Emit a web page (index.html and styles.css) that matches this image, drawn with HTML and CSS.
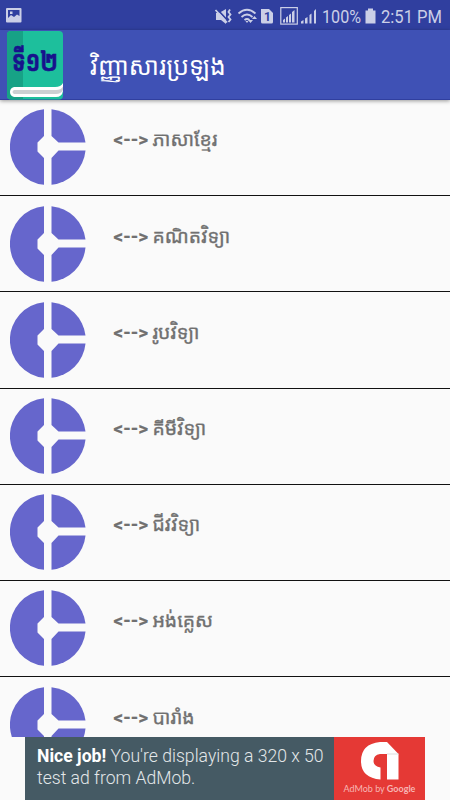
FILE: index.html
```html
<!DOCTYPE html>
<html lang="km">
<head>
    <meta charset="UTF-8">
    <meta name="viewport" content="width=device-width, initial-scale=1.0">
    <title>វិញ្ញាសារប្រឡង</title>
    <link rel="stylesheet" href="styles.css">
</head>
<body>
    <!-- Shared shape for the list icons -->
    <svg class="defs" width="0" height="0">
        <symbol id="wheel" viewBox="0 0 76 76">
            <path d="M34 0.200V27L27.500 33.500V42.500L34 49V75.800A38 38 0 0 1 34 0.200Z"/>
            <path d="M41.500 0.200A38 38 0 0 1 75.500 33.500H48.500L41.500 27Z"/>
            <path d="M41.500 75.800V49L48.500 41.500H75.500A38 38 0 0 1 41.500 75.800Z"/>
        </symbol>
    </svg>

    <div class="status-bar">
        <svg class="status-picture" width="16" height="15" viewBox="0 0 16 15">
            <path fill-rule="evenodd" d="M1 0H14.500Q15.500 0 15.500 1V13.500Q15.500 14.500 14.500 14.500H1Q0 14.500 0 13.500V1Q0 0 1 0ZM2 2V10L5 7L8 9L11 6.500L13.500 8V2ZM4 3.500H6.500V6H4Z"/>
        </svg>
        <svg class="status-icons" width="163" height="25" viewBox="0 0 163 25">
            <!-- Muted speaker -->
            <path d="M1 8H4L11 4V19L6 15H1Z"/>
            <path class="cut" d="M2 4L14 17"/>
            <path class="line" d="M0.500 5L12 17.500M15 4.500L13.500 7L15.500 9.500L13.500 12L15.500 14.500L13.500 17"/>
            <!-- Wifi -->
            <path class="line" d="M23.500 8.500Q32 1 40.500 8.500M26.500 12Q32 7 37.500 12M29.500 15Q32 13 34.500 15"/>
            <path d="M30.500 16H33.500L32 18ZM33 15H38L35.500 18ZM37 14L39.500 11L42 14Z"/>
            <!-- Sim card -->
            <path d="M46 4H54L58 8V17Q58 18.500 56.500 18.500H47.500Q46 18.500 46 17Z"/>
            <text class="sim" x="49" y="15.500">1</text>
            <!-- Signal strength -->
            <rect class="frame" x="65.800" y="2.600" width="16.500" height="16.500"/>
            <path d="M68 15L70 13.500V17.500H68ZM71 12.500L73 11V17.500H71ZM74 10L76 8.500V17.500H74ZM77 7L79.500 5V17.500H77Z"/>
            <path d="M86 16.500L88.500 15V18.500H86ZM90 13.500L92.500 12V18.500H90ZM94.500 10L96.500 8.500V18.500H94.500ZM99 6L101 4V18.500H99Z"/>
            <text x="107" y="18" textLength="39" lengthAdjust="spacingAndGlyphs">100%</text>
            <!-- Battery -->
            <path d="M153 3.500H158V5.500H160.500V18.500H150.500V5.500H153Z"/>
        </svg>
        <svg class="status-time" width="68" height="25" viewBox="0 0 68 25">
            <text x="1" y="18" textLength="61" lengthAdjust="spacingAndGlyphs">2:51 PM</text>
        </svg>
    </div>

    <div class="toolbar">
        <svg class="logo" width="57" height="69" viewBox="0 0 57 69">
            <rect width="56" height="68.500" rx="4" fill="#1dbf9c"/>
            <path d="M4 0H16V68.500H4Q0 68.500 0 64.500V4Q0 0 4 0Z" fill="#17a286"/>
            <path d="M7 56H48Q54 56 56 52V60Q55 66 49 66H7Q3 65 3 61Q3 57 7 56Z" fill="#fff"/>
            <path d="M7 59H49Q54 59 56 55.500V59Q54 63 49 63H7Q4 61 7 59Z" fill="#ccd0d2"/>
            <text class="logo-text" x="5" y="40" textLength="46" lengthAdjust="spacingAndGlyphs">ទី១២</text>
        </svg>
        <h1 class="title">វិញ្ញាសារប្រឡង</h1>
    </div>

    <div class="list">
        <div class="row"><svg class="wheel"><use href="#wheel"/></svg><p class="subject"><span class="arrow">&lt;--&gt;</span>ភាសាខ្មែរ</p></div>
        <div class="row"><svg class="wheel"><use href="#wheel"/></svg><p class="subject"><span class="arrow">&lt;--&gt;</span>គណិតវិទ្យា</p></div>
        <div class="row"><svg class="wheel"><use href="#wheel"/></svg><p class="subject"><span class="arrow">&lt;--&gt;</span>រូបវិទ្យា</p></div>
        <div class="row"><svg class="wheel"><use href="#wheel"/></svg><p class="subject"><span class="arrow">&lt;--&gt;</span>គីមីវិទ្យា</p></div>
        <div class="row"><svg class="wheel"><use href="#wheel"/></svg><p class="subject"><span class="arrow">&lt;--&gt;</span>ជីវវិទ្យា</p></div>
        <div class="row"><svg class="wheel"><use href="#wheel"/></svg><p class="subject"><span class="arrow">&lt;--&gt;</span>អង់គ្លេស</p></div>
        <div class="row"><svg class="wheel"><use href="#wheel"/></svg><p class="subject"><span class="arrow">&lt;--&gt;</span>បារាំង</p></div>
    </div>

    <div class="ad">
        <p class="ad-text"><b>Nice job!</b> You're displaying a 320 x 50<br>test ad from AdMob.</p>
        <div class="ad-brand">
            <svg width="38" height="38" viewBox="0 0 38 38">
                <path d="M19 0H26L37.500 12V37.500H26V12H19Q12.500 13 12.500 19Q12.500 24 19.500 25.500V37.500Q0 36 0 19Q0 2 19 0Z" fill="#fff"/>
                <path d="M26 12H37.500" stroke="#ddd"/>
            </svg>
            <p class="ad-name">AdMob by <b>Google</b></p>
        </div>
    </div>
</body>
</html>
```

FILE: styles.css
```css
body {
    margin: 0;
    width: 450px;
    height: 800px;
    display: flex;
    flex-direction: column;
    overflow: hidden;
    background-color: #fafafa;
    font-family: Roboto, "Noto Sans", "Noto Sans Khmer", "DejaVu Sans", sans-serif;
}

p, h1 {
    margin: 0;
}

.defs {
    display: none;
}

/* Phone status bar */
.status-bar {
    display: flex;
    flex: none;
    height: 30px;
    box-sizing: border-box;
    padding: 5px 0 0 6px;
    background-color: #303f9f;
    fill: #cbcfe7;
    font-size: 19px;
}

.status-bar svg {
    flex: none;
    overflow: visible;
}

.status-picture {
    margin-top: 3px;
}

.status-icons {
    margin-left: 193px;
}

.status-time {
    margin-left: 2px;
}

.line, .cut, .frame {
    fill: none;
    stroke: #cbcfe7;
    stroke-width: 1.8;
}

.cut {
    stroke: #303f9f;
}

.frame {
    stroke-width: 1.2;
}

.sim {
    fill: #303f9f;
    font-size: 12px;
    font-weight: bold;
}

/* App bar */
.toolbar {
    display: flex;
    flex: none;
    height: 70px;
    box-sizing: border-box;
    padding-left: 7px;
    padding-top: 1px;
    background-color: #3f51b5;
    border-bottom: 1px solid #303f9f;
    box-shadow: 0 1px 4px rgba(0,0,0,0.4);
    z-index: 1;
}

.logo {
    overflow: visible;
}

.logo-text {
    fill: #17128c;
    stroke: #17128c;
    stroke-width: 0.6;
    font-size: 29px;
    font-weight: bold;
}

.title {
    margin-left: 26px;
    line-height: 71px;
    font-size: 24.8px;
    font-weight: normal;
    color: #fff;
    white-space: nowrap;
}

/* Subject list */
.list {
    flex: none;
    height: 637px;
    overflow: hidden;
}

.row {
    display: flex;
    height: 96.2px;
    box-sizing: border-box;
    padding: 9.4px 9.5px 0;
    border-bottom: 1px solid #111;
}

.wheel {
    flex: none;
    width: 76px;
    height: 76px;
    fill: #6666cc;
}

.subject {
    display: flex;
    margin-left: 28px;
    height: 61px;
    line-height: 61px;
    font-size: 19.4px;
    color: #707070;
    -webkit-text-stroke: 0.35px #707070;
    white-space: nowrap;
}

.arrow {
    width: 39px;
    font-size: 19px;
    font-weight: bold;
    -webkit-text-stroke: 0.2px #707070;
}

/* Banner ad */
.ad {
    display: flex;
    flex: none;
    width: 400px;
    height: 63px;
    margin: 0 25px;
    background-color: #455a64;
}

.ad-text {
    width: 297px;
    padding: 9px 0 0 12px;
    font-size: 17.6px;
    font-weight: 300;
    line-height: 21.5px;
    color: #e3e7e9;
    white-space: nowrap;
}

.ad-text b {
    font-weight: bold;
    color: #fff;
}

.ad-brand {
    width: 91px;
    padding-top: 5px;
    background-color: #e53935;
    text-align: center;
}

.ad-brand svg {
    display: block;
    margin: 0 auto;
}

.ad-name {
    margin-top: 3px;
    font-family: Lato, sans-serif;
    font-size: 9px;
    line-height: 12px;
    color: #f7b5b3;
}
```
